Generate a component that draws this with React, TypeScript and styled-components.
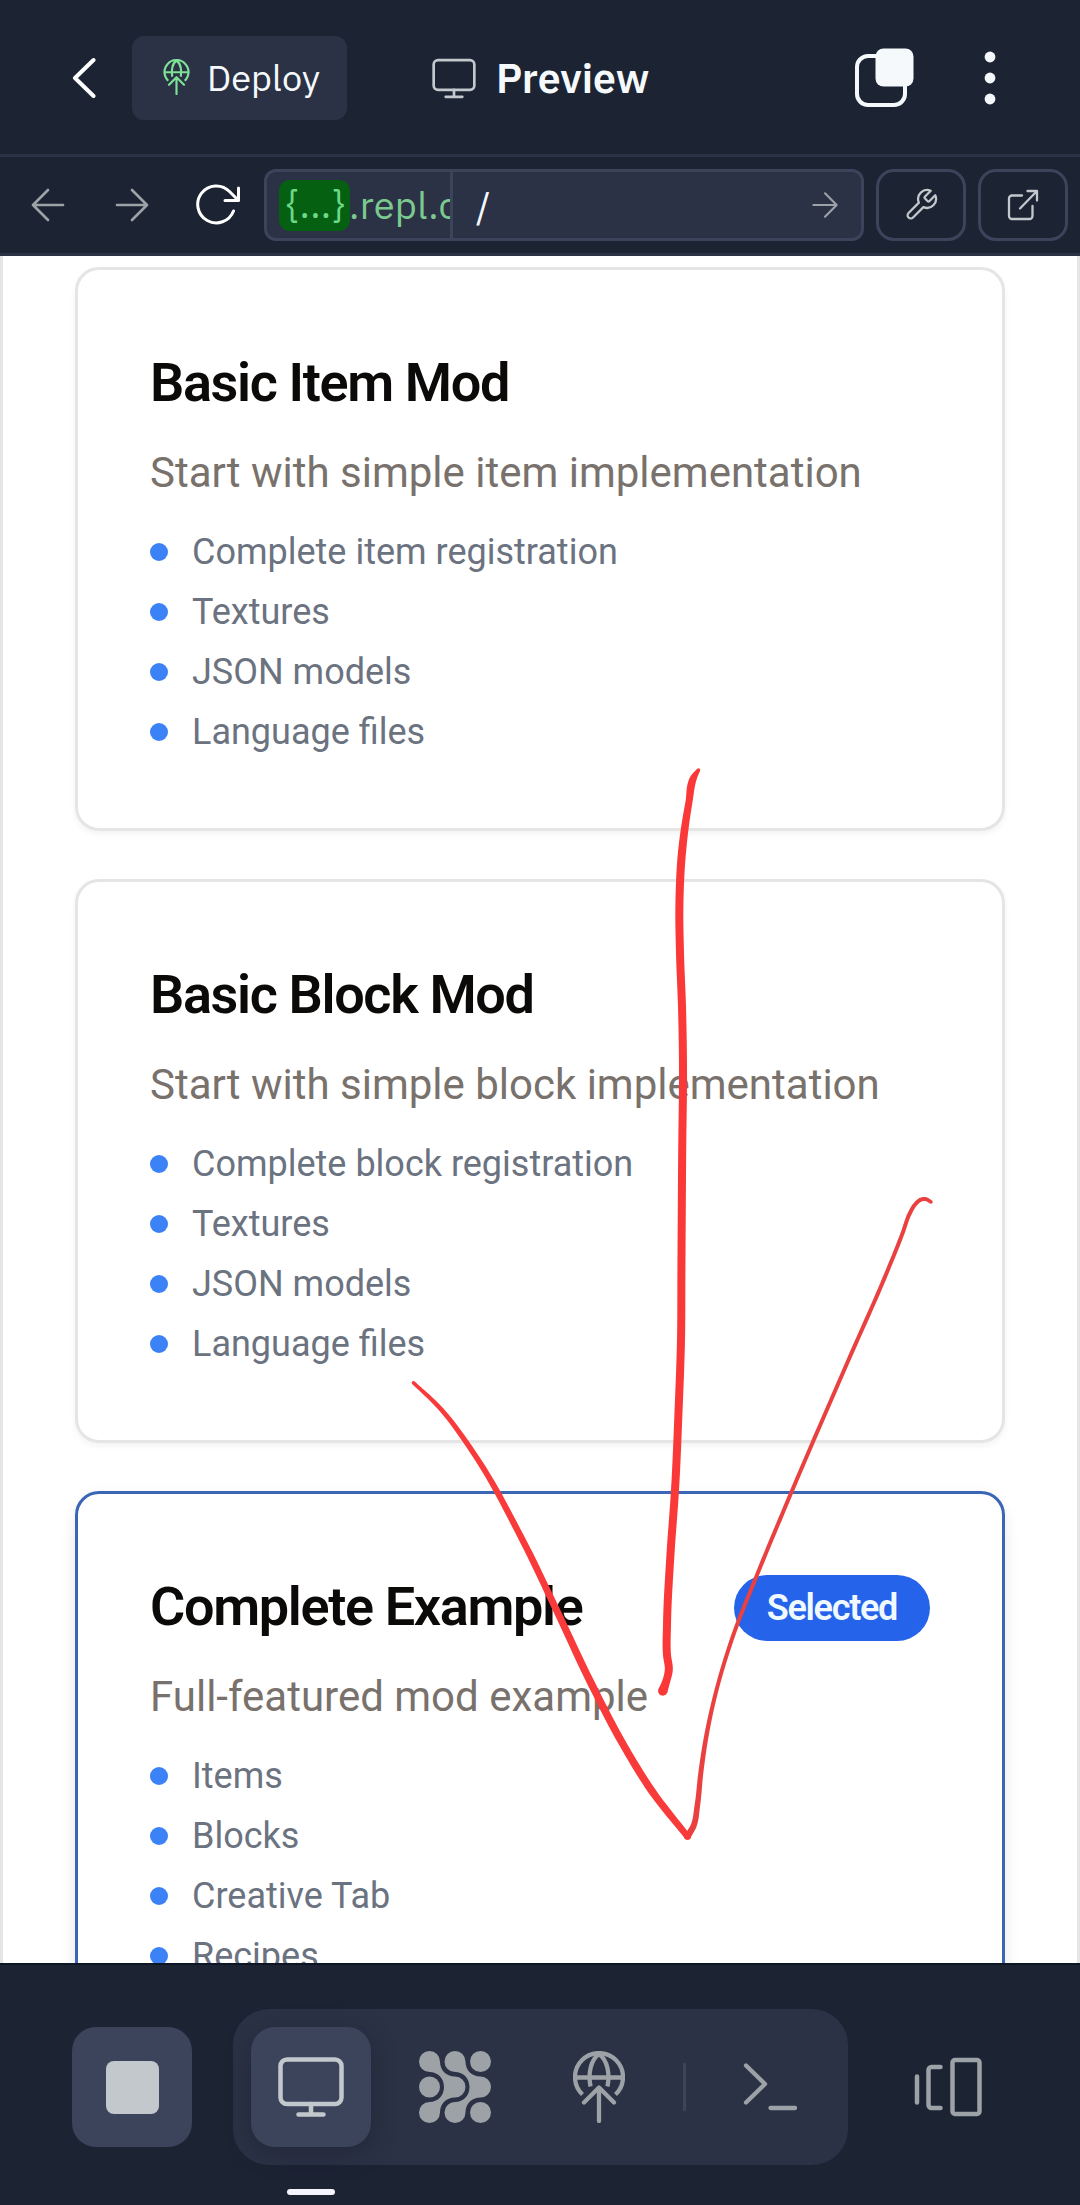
import React from "react";
import styled, { createGlobalStyle } from "styled-components";

const ui = `"IBM Plex Sans", Roboto, "Noto Sans", sans-serif`;

const c = {
  root: "#1c2333",
  raised: "#2b3245",
  line: "#3c445c",
  dim: "#9da2a6",
  soft: "#c2c8cc",
  white: "#f5f9fc",
  green: "#6cd98a",
};

const Global = createGlobalStyle`
  * { box-sizing: border-box; }
  body { margin: 0; background: ${c.root}; }
`;

const Screen = styled.div`
  position: relative;
  display: flex;
  flex-direction: column;
  width: 1080px;
  height: 2205px;
  overflow: hidden;
  background: ${c.root};
  font-family: ${ui};
`;

const TopBar = styled.header`
  display: flex;
  align-items: center;
  flex: none;
  height: 157px;
  padding: 2px 84px 0 72px;
  border-bottom: 3px solid ${c.raised};

  svg { display: block; flex: none; }
`;

const DeployButton = styled.button`
  display: flex;
  align-items: center;
  gap: 17px;
  width: 215px;
  height: 84px;
  margin-left: 36px;
  padding: 0 0 2px 31px;
  border: 0;
  border-radius: 12px;
  background: ${c.raised};
  color: ${c.white};
  font: 400 36px ${ui};
  letter-spacing: 0.1px;
`;

const PaneTitle = styled.h1`
  display: flex;
  align-items: center;
  gap: 20px;
  flex: 1;
  margin: 0 0 0 85px;
  color: ${c.white};
  font-size: 41px;
  font-weight: 600;
  line-height: 50px;
`;

const MoreSlot = styled.div`
  margin-left: 70px;
`;

const AddressBar = styled.nav`
  display: flex;
  align-items: center;
  flex: none;
  height: 99px;
  padding: 0 12px 0 30px;
  border-bottom: 3px solid ${c.raised};

  svg { display: block; flex: none; }
`;

const NavIcons = styled.div`
  display: flex;
  align-items: center;
  gap: 48px;
  width: 234px;
`;

const ReloadSlot = styled.div`
  margin-left: -3px;
`;

const Field = styled.div`
  display: flex;
  width: 600px;
  height: 72px;
  border: 3px solid ${c.line};
  border-radius: 12px;
  background: ${c.raised};
  font-size: 38px;
`;

const Host = styled.div`
  display: flex;
  align-items: center;
  width: 186px;
  padding-left: 12px;
  overflow: hidden;
  border-right: 3px solid ${c.line};
  color: #7bc98f;
  white-space: nowrap;
  letter-spacing: 0.3px;
`;

const HostToken = styled.span`
  flex: none;
  width: 71px;
  height: 51px;
  padding-left: 2px;
  border-radius: 11px;
  background: #056012;
  color: ${c.green};
  line-height: 48px;
  text-align: center;
`;

const HostName = styled.span`
  margin-left: -1px;
  padding-bottom: 2px;
`;

const Path = styled.div`
  display: flex;
  align-items: center;
  justify-content: space-between;
  flex: 1;
  padding: 0 22px 0 23px;
  color: ${c.white};
`;

const OutlineButton = styled.button`
  display: grid;
  place-items: center;
  width: 90px;
  height: 72px;
  margin-left: 12px;
  padding: 0;
  border: 3px solid ${c.line};
  border-radius: 18px;
  background: transparent;
`;

const Page = styled.main`
  display: flex;
  flex-direction: column;
  gap: 48px;
  height: 1707px;
  padding: 11px 72px 0;
  overflow: hidden;
  border: solid #e5e5e5;
  border-width: 0 3px;
  background: #fff;
  font-family: Roboto, sans-serif;
`;

const Card = styled.section<{ $selected?: boolean }>`
  flex: none;
  height: 564px;
  padding: 69px 72px 0;
  border: 3px solid ${(p) => (p.$selected ? "#3b66b5" : "#e5e5e5")};
  border-radius: 24px;
  background: #fff;
  box-shadow: ${(p) =>
    p.$selected
      ? "0 12px 18px -3px rgba(0,0,0,.1), 0 0 14px rgba(0,0,0,.03)"
      : "0 3px 6px rgba(0,0,0,.05)"};
`;

const CardHead = styled.div`
  display: flex;
  align-items: center;
  justify-content: space-between;
  height: 90px;
`;

const CardTitle = styled.h2`
  margin: 0;
  padding-bottom: 2px;
  color: #0c0a09;
  font-size: 54px;
  font-weight: 600;
  line-height: 72px;
  letter-spacing: -1.35px;
`;

const Badge = styled.span`
  padding: 0 33px;
  border-radius: 33px;
  background: #2563eb;
  color: #f0f9ff;
  font-size: 36px;
  font-weight: 600;
  line-height: 66px;
  letter-spacing: -1.3px;
`;

const Description = styled.p`
  margin: 14px 0 0;
  color: #78716c;
  font-size: 42px;
  line-height: 60px;
`;

const Features = styled.ul`
  margin: 19px 0 0;
  padding: 0;
  list-style: none;
`;

const Feature = styled.li`
  display: flex;
  align-items: center;
  gap: 24px;
  height: 60px;
  color: #6b7280;
  font-size: 36px;

  &::before {
    content: "";
    width: 18px;
    height: 18px;
    border-radius: 50%;
    background: #3b82f6;
  }
`;

const BottomBar = styled.footer`
  display: flex;
  align-items: flex-start;
  flex: none;
  height: 242px;
  padding: 44px 72px 0;
  border-top: 2px solid #0e1525;

  svg { display: block; }
`;

const Tool = styled.button<{ $filled?: boolean; $raised?: boolean }>`
  position: relative;
  display: grid;
  place-items: center;
  flex: none;
  width: 120px;
  height: 120px;
  padding: 0;
  border: 0;
  border-radius: 24px;
  background: ${(p) => (p.$filled ? c.line : "transparent")};
  box-shadow: ${(p) => (p.$raised ? "0 6px 24px rgba(20,24,38,.4)" : "none")};
`;

const StopSlot = styled.div`
  padding-top: 18px;
`;

const StopSquare = styled.span`
  width: 53px;
  height: 53px;
  border-radius: 8px;
  background: ${c.soft};
`;

const Dock = styled.div`
  display: flex;
  align-items: center;
  gap: 24px;
  width: 615px;
  height: 156px;
  margin-left: 41px;
  padding: 0 18px;
  border-radius: 36px;
  background: ${c.raised};
`;

const Divider = styled.span`
  width: 3px;
  height: 48px;
  background: ${c.line};
`;

const ActiveMark = styled.span`
  position: absolute;
  top: 162px;
  left: 36px;
  width: 48px;
  height: 6px;
  border-radius: 3px;
  background: #f5f5ff;
`;

const TabsSlot = styled.div`
  padding: 18px 0 0 40px;
`;

const Ink = styled.svg`
  position: absolute;
  top: 0;
  left: 0;
  pointer-events: none;
`;

const line = {
  fill: "none",
  strokeLinecap: "round" as const,
  strokeLinejoin: "round" as const,
};

const BackIcon = () => (
  <svg width="24" height="44" viewBox="0 0 24 44" {...line} stroke="#fff" strokeWidth="4">
    <path d="M21.500 4 3 22l18.500 18" />
  </svg>
);

const GlobeUp = ({ w, h, color }: { w: number; h: number; color: string }) => (
  <svg width={w} height={h} viewBox="0 0 52 72" {...line} stroke={color} strokeWidth="4.300">
    <path d="M9.500 43.500a24 24 0 1 1 33 0" strokeLinecap="butt" />
    <path d="M2.500 26.500h47" />
    <path d="M17.500 35.500C15 23 17.500 9 26 3c8.500 6 11 20 8.500 32.500" strokeLinecap="butt" />
    <path d="M11 51.500 26 36.500l15 15M26 37v33" />
  </svg>
);

const Monitor = ({ w, h, sw }: { w: number; h: number; sw: number }) => (
  <svg width={w} height={h} viewBox="0 0 66 60" {...line} stroke={c.soft} strokeWidth={sw}>
    <rect x="2.500" y="2.500" width="61" height="44.500" rx="6.500" />
    <path d="M33 47v10.500M20.500 57.500h25" />
  </svg>
);

const Windows = () => (
  <svg width="60" height="60" viewBox="0 0 60 60" fill="none">
    <rect x="3" y="8" width="48" height="49" rx="11" stroke={c.white} strokeWidth="4" />
    <rect x="21.500" y="0.500" width="38" height="38" rx="8" fill={c.white} />
  </svg>
);

const Dots = () => (
  <svg width="12" height="54" viewBox="0 0 12 54" fill={c.white}>
    <circle cx="6" cy="6" r="5.400" />
    <circle cx="6" cy="27" r="5.400" />
    <circle cx="6" cy="48" r="5.400" />
  </svg>
);

const Arrow = ({ size, flip }: { size: number; flip?: boolean }) => (
  <svg width={size} height={size} viewBox="0 0 36 36" {...line} stroke={c.dim} strokeWidth="2.700">
    <path d={flip ? "M33 18H3M18 3 3 18l15 15" : "M3 18h30M18 3l15 15-15 15"} />
  </svg>
);

const Reload = () => (
  <svg width="48" height="44" viewBox="0 0 48 44" {...line} stroke="#fff" strokeWidth="3">
    <path d="M38.500 28A18.500 18.500 0 1 1 34.500 8.500L43 17" />
    <path d="M43.500 5v12.500H30" />
  </svg>
);

const Wrench = () => (
  <svg width="36" height="36" viewBox="0 0 24 24" {...line} stroke={c.soft} strokeWidth="1.500">
    <path d="M14.700 6.300a1 1 0 0 0 0 1.400l1.600 1.600a1 1 0 0 0 1.400 0l3.800-3.800a6 6 0 0 1-7.900 7.900l-6.900 6.900a2.100 2.100 0 0 1-3-3l6.900-6.900a6 6 0 0 1 7.900-7.900z" />
  </svg>
);

const External = () => (
  <svg width="32" height="32" viewBox="0 0 32 32" {...line} stroke={c.soft} strokeWidth="2.300">
    <path d="M15 6.500H5a3 3 0 0 0-3 3V27a3 3 0 0 0 3 3h17.500a3 3 0 0 0 3-3V17" />
    <path d="M20.500 2H30v9.500M30 2 13 19.500" />
  </svg>
);

const Agent = () => (
  <svg width="72" height="72" viewBox="0 0 72 72" fill={c.dim}>
    <circle cx="61.500" cy="10.500" r="10.500" />
    <circle cx="10.500" cy="36" r="10.500" />
    <circle cx="61.500" cy="61.500" r="10.500" />
    <path d="M10.500 0A10.500 10.500 0 0 1 21 10.500C21 19 27 25.500 36 25.500A10.500 10.500 0 0 1 36 46.500C27 46.500 21 53 21 61.500A10.500 10.500 0 1 1 10.500 51C19 51 25 44.500 25 36S19 21 10.500 21A10.500 10.500 0 0 1 10.500 0z" />
    <path d="M36 0A10.500 10.500 0 0 1 46.500 10.500C46.500 19 52.500 25.500 61.500 25.500A10.500 10.500 0 0 1 61.500 46.500C52.500 46.500 46.500 53 46.500 61.500A10.500 10.500 0 1 1 36 51C44.500 51 50.500 44.500 50.500 36S44.500 21 36 21A10.500 10.500 0 0 1 36 0z" />
  </svg>
);

const Prompt = () => (
  <svg width="54" height="50" viewBox="0 0 54 50" {...line} stroke={c.dim} strokeWidth="4.300">
    <path d="M3 3.500 22 22 3 40.500M27.500 46h24.500" />
  </svg>
);

const Tabs = () => (
  <svg width="68" height="60" viewBox="0 0 68 60" {...line} stroke={c.dim} strokeWidth="4.500">
    <path d="M3 19.500v26M26.500 10h-9a3 3 0 0 0-3 3v35a3 3 0 0 0 3 3h9" />
    <rect x="38.500" y="3" width="27" height="54" rx="2.500" />
  </svg>
);

// A pen sample: x, y and the width of the nib at that point.
type Sample = [number, number, number];

const shaft: Sample[] = [
  [698.5, 770, 3.5], [694, 777, 6.5], [688.8, 803, 7], [682.2, 850, 8], [679.4, 905, 8],
  [680, 953, 8], [682, 1007, 8], [683, 1065, 8], [682.2, 1150, 8], [681.4, 1273, 8],
  [681, 1340, 8], [678.7, 1407, 8], [675, 1490, 8], [670.3, 1557, 8], [667, 1625, 8],
  [667, 1655, 8], [668.8, 1670, 8], [666, 1682, 8], [662.8, 1691, 9.5],
];

const leftHead: Sample[] = [
  [413.4, 1382.7, 3.5], [438, 1406, 4.5], [475.5, 1456, 5.5], [521, 1537, 6.5],
  [556, 1609, 7], [590, 1681, 7.5], [624, 1746, 7.5], [652.6, 1792, 7.5], [687.5, 1836.5, 6.5],
];

const rightHead: Sample[] = [
  [687.5, 1836.5, 6.5], [693.5, 1826, 6], [697.4, 1805, 5.5], [700.8, 1773, 5], [706, 1738, 4.5],
  [716.5, 1690, 4], [733, 1636, 4], [757, 1575, 4], [791.5, 1492, 4], [848.5, 1360, 4],
  [887, 1272, 4], [903, 1232, 4], [909.5, 1214, 4], [915.5, 1204, 4], [920.7, 1199.7, 4],
  [925.5, 1199, 4], [931, 1202, 3.5],
];

// Hermite interpolation keeps the stroke smooth through every sample.
const smooth = (pts: Sample[], steps = 12): Sample[] => {
  const out: Sample[] = [];
  const gap = (a: Sample, b: Sample) => Math.hypot(b[0] - a[0], b[1] - a[1]) || 1;
  const slope = (i: number, k: number) => {
    if (i === 0) return (pts[1][k] - pts[0][k]) / gap(pts[0], pts[1]);
    if (i === pts.length - 1) return (pts[i][k] - pts[i - 1][k]) / gap(pts[i - 1], pts[i]);
    const g0 = gap(pts[i - 1], pts[i]);
    const g1 = gap(pts[i], pts[i + 1]);
    const before = (pts[i][k] - pts[i - 1][k]) / g0;
    const after = (pts[i + 1][k] - pts[i][k]) / g1;
    return (before * g1 + after * g0) / (g0 + g1);
  };
  for (let i = 0; i < pts.length - 1; i++) {
    const span = gap(pts[i], pts[i + 1]);
    for (let s = 0; s < steps; s++) {
      const t = s / steps;
      const at = (k: number) =>
        (2 * t ** 3 - 3 * t ** 2 + 1) * pts[i][k] +
        (t ** 3 - 2 * t ** 2 + t) * span * slope(i, k) +
        (3 * t ** 2 - 2 * t ** 3) * pts[i + 1][k] +
        (t ** 3 - t ** 2) * span * slope(i + 1, k);
      out.push([at(0), at(1), at(2)]);
    }
  }
  out.push(pts[pts.length - 1]);
  return out;
};

const PenStroke = ({ samples, color }: { samples: Sample[]; color: string }) => {
  const pts = smooth(samples);
  const sides = [1, -1].map((side) =>
    pts.map((p, i) => {
      const a = pts[Math.max(0, i - 1)];
      const b = pts[Math.min(pts.length - 1, i + 1)];
      const len = Math.hypot(b[0] - a[0], b[1] - a[1]) || 1;
      const r = (side * p[2]) / 2 / len;
      return `${(p[0] - (b[1] - a[1]) * r).toFixed(2)} ${(p[1] + (b[0] - a[0]) * r).toFixed(2)}`;
    }),
  );
  const first = pts[0];
  const last = pts[pts.length - 1];
  return (
    <g fill={color}>
      <path d={`M${sides[0].join("L")}L${sides[1].reverse().join("L")}z`} />
      <circle cx={first[0]} cy={first[1]} r={first[2] / 2} />
      <circle cx={last[0]} cy={last[1]} r={last[2] / 2} />
    </g>
  );
};

const cards = [
  {
    title: "Basic Item Mod",
    text: "Start with simple item implementation",
    items: ["Complete item registration", "Textures", "JSON models", "Language files"],
  },
  {
    title: "Basic Block Mod",
    text: "Start with simple block implementation",
    items: ["Complete block registration", "Textures", "JSON models", "Language files"],
  },
  {
    title: "Complete Example",
    text: "Full-featured mod example",
    items: ["Items", "Blocks", "Creative Tab", "Recipes"],
    selected: true,
  },
];

export default function App() {
  return (
    <Screen>
      <Global />
      <TopBar>
        <BackIcon />
        <DeployButton>
          <GlobeUp w={27} h={36} color="#7ee195" />
          Deploy
        </DeployButton>
        <PaneTitle>
          <Monitor w={44} h={41} sw={4} />
          Preview
        </PaneTitle>
        <Windows />
        <MoreSlot>
          <Dots />
        </MoreSlot>
      </TopBar>
      <AddressBar>
        <NavIcons>
          <Arrow size={36} flip />
          <Arrow size={36} />
          <ReloadSlot>
            <Reload />
          </ReloadSlot>
        </NavIcons>
        <Field>
          <Host>
            <HostToken>{"{...}"}</HostToken>
            <HostName>.repl.c</HostName>
          </Host>
          <Path>
            /
            <Arrow size={28} />
          </Path>
        </Field>
        <OutlineButton>
          <Wrench />
        </OutlineButton>
        <OutlineButton>
          <External />
        </OutlineButton>
      </AddressBar>
      <Page>
        {cards.map((card) => (
          <Card key={card.title} $selected={card.selected}>
            <CardHead>
              <CardTitle>{card.title}</CardTitle>
              {card.selected && <Badge>Selected</Badge>}
            </CardHead>
            <Description>{card.text}</Description>
            <Features>
              {card.items.map((item) => (
                <Feature key={item}>{item}</Feature>
              ))}
            </Features>
          </Card>
        ))}
      </Page>
      <BottomBar>
        <StopSlot>
          <Tool $filled>
            <StopSquare />
          </Tool>
        </StopSlot>
        <Dock>
          <Tool $filled $raised>
            <Monitor w={66} h={60} sw={4.5} />
            <ActiveMark />
          </Tool>
          <Tool>
            <Agent />
          </Tool>
          <Tool>
            <GlobeUp w={52} h={72} color={c.dim} />
          </Tool>
          <Divider />
          <Tool>
            <Prompt />
          </Tool>
        </Dock>
        <TabsSlot>
          <Tool>
            <Tabs />
          </Tool>
        </TabsSlot>
      </BottomBar>
      <Ink width="1080" height="2205" viewBox="0 0 1080 2205">
        <PenStroke samples={shaft} color="#fb3838" />
        <PenStroke samples={rightHead} color="#ea4040" />
        <PenStroke samples={leftHead} color="#f93a3a" />
      </Ink>
    </Screen>
  );
}
